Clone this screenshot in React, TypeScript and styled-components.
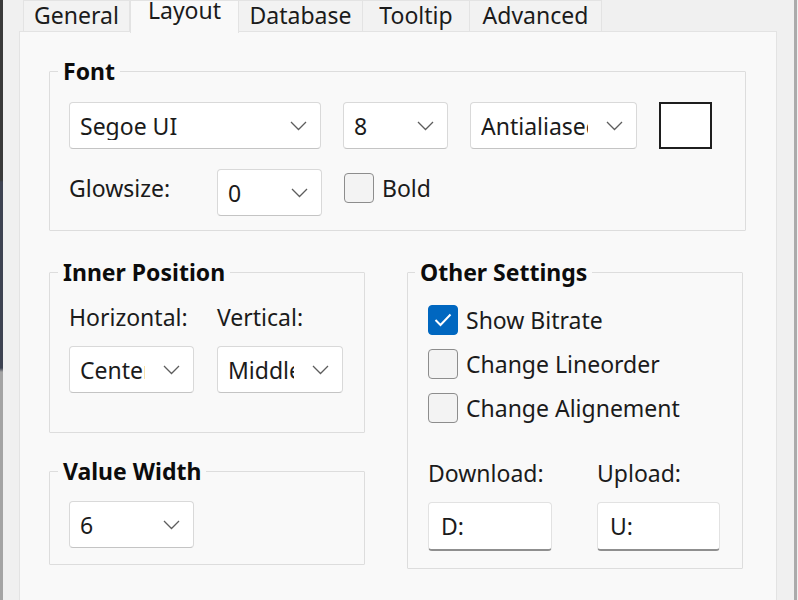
import React from "react";
import styled, { createGlobalStyle } from "styled-components";

const GlobalStyle = createGlobalStyle`
  html, body {
    margin: 0;
    padding: 0;
    background: #f0f0f0;
    overflow: hidden;
  }
  body {
    font-family: "Noto Sans", "Open Sans", sans-serif;
    color: #1b1b1b;
  }
`;

const Screen = styled.div`
  display: flex;
  width: 798px;
  height: 600px;
  overflow: hidden;
`;

// strip of the window behind the dialog
const BackEdge = styled.div`
  width: 3px;
  flex: none;
  background: linear-gradient(
    to bottom,
    #3a3a3a 0,
    #3a3a3a 180px,
    #3e4352 182px,
    #3e4352 368px,
    #a4a4a4 372px,
    #a4a4a4 100%
  );
`;

const Dialog = styled.div`
  flex: 1;
  display: flex;
  flex-direction: column;
  background: #f0f0f0;
  padding: 0 17px 0 16px;
  border-right: 3px solid #ababab;
  margin-right: 1px;
`;

const TabStrip = styled.div`
  display: flex;
  align-items: flex-end;
  height: 31px;
  padding-left: 4px;
  position: relative;
  z-index: 1;
`;

const Tab = styled.div<{ $w: number; $active?: boolean }>`
  width: ${(p) => p.$w}px;
  height: ${(p) => (p.$active ? 33 : 31)}px;
  margin-bottom: ${(p) => (p.$active ? -2 : 0)}px;
  box-sizing: border-box;
  display: flex;
  justify-content: center;
  align-items: ${(p) => (p.$active ? "flex-start" : "flex-end")};
  padding-bottom: ${(p) => (p.$active ? 0 : 2)}px;
  font-size: 23px;
  line-height: ${(p) => (p.$active ? 18 : 27)}px;
  color: #1b1b1b;
  background: ${(p) => (p.$active ? "#f9f9f9" : "#f2f2f2")};
  border: 1px solid #e3e3e3;
  border-bottom: none;
  border-left-width: ${(p) => (p.$active ? 1 : 0)}px;
  &:first-child {
    border-left-width: 1px;
  }
  white-space: nowrap;
`;

const Panel = styled.div`
  flex: 1;
  background: #f9f9f9;
  border: 1px solid #e3e3e3;
  border-bottom: none;
  padding: 25px 30px 0 29px;
`;

const Group = styled.fieldset<{ $pt: number; $pb: number; $pl?: number }>`
  margin: 0;
  min-width: 0;
  border: 1px solid #dddddd;
  border-radius: 1px;
  padding: ${(p) => p.$pt}px 12px ${(p) => p.$pb}px ${(p) => p.$pl ?? 19}px;
`;

const Legend = styled.legend<{ $shift?: number }>`
  margin-left: ${(p) => p.$shift ?? -11}px;
  padding: 0 5px;
  font-size: 23px;
  line-height: 28px;
  font-weight: 700;
  color: #0c0c0c;
`;

const Row = styled.div<{ $gap: number }>`
  display: flex;
  align-items: center;
  gap: ${(p) => p.$gap}px;
`;

const Columns = styled.div`
  display: grid;
  grid-template-columns: 316px 336px;
  column-gap: 42px;
  align-items: start;
  margin-top: 27px;
`;

const Stack = styled.div<{ $gap: number }>`
  display: flex;
  flex-direction: column;
  gap: ${(p) => p.$gap}px;
`;

const FieldGrid = styled.div<{ $cols: string; $gap: number; $top?: number }>`
  display: grid;
  grid-template-columns: ${(p) => p.$cols};
  column-gap: ${(p) => p.$gap}px;
  row-gap: 15px;
  margin-top: ${(p) => p.$top ?? 0}px;
`;

const Label = styled.div<{ $w?: number; $raise?: number }>`
  font-size: 23px;
  line-height: 28px;
  white-space: nowrap;
  margin-bottom: ${(p) => p.$raise ?? 0}px;
  ${(p) => (p.$w ? `width: ${p.$w}px; flex: none;` : "")}
`;

const ComboBox = styled.div<{ $w: number }>`
  width: ${(p) => p.$w}px;
  height: 47px;
  flex: none;
  box-sizing: border-box;
  display: flex;
  align-items: center;
  background: #ffffff;
  border: 1px solid #d9d9d9;
  border-bottom-color: #c4c4c4;
  border-radius: 4px;
  padding: 0 13px 0 10px;
`;

const ComboText = styled.div`
  flex: 1;
  min-width: 0;
  overflow: hidden;
  white-space: nowrap;
  font-size: 23px;
  line-height: 28px;
  margin-right: 18px;
`;

const ColorSwatch = styled.div`
  width: 53px;
  height: 47px;
  box-sizing: border-box;
  border: 2px solid #1e1e1e;
  background: #ffffff;
  flex: none;
`;

const CheckRow = styled.label<{ $raise?: number }>`
  display: flex;
  align-items: center;
  gap: 8px;
  font-size: 23px;
  line-height: 28px;
  white-space: nowrap;
  margin-bottom: ${(p) => p.$raise ?? 0}px;
`;

const Box = styled.span<{ $checked?: boolean }>`
  width: 30px;
  height: 30px;
  flex: none;
  box-sizing: border-box;
  border-radius: 4px;
  display: flex;
  align-items: center;
  justify-content: center;
  background: ${(p) => (p.$checked ? "#0067c0" : "#f3f3f3")};
  border: 1px solid ${(p) => (p.$checked ? "#0067c0" : "#8d8d8d")};
`;

const TextBox = styled.div<{ $w: number }>`
  width: ${(p) => p.$w}px;
  height: 49px;
  box-sizing: border-box;
  display: flex;
  align-items: center;
  padding-left: 12px;
  background: #ffffff;
  border: 1px solid #e2e2e2;
  border-bottom: 2px solid #8f8f8f;
  border-radius: 4px;
  font-size: 23px;
  line-height: 28px;
`;

const Chevron = () => (
  <svg width="17" height="10" viewBox="0 0 17 10">
    <polyline points="1,1 8.5,8.5 16,1" fill="none" stroke="#5d5d5d" strokeWidth="1.3" />
  </svg>
);

const Combo = ({ w, value }: { w: number; value: string }) => (
  <ComboBox $w={w}>
    <ComboText>{value}</ComboText>
    <Chevron />
  </ComboBox>
);

const CheckBox = ({ checked, label, raise }: { checked?: boolean; label: string; raise?: number }) => (
  <CheckRow $raise={raise}>
    <Box $checked={checked}>
      {checked && (
        <svg width="20" height="16" viewBox="0 0 20 16">
          <polyline points="2.5,8 7.5,13 17.5,2.5" fill="none" stroke="#ffffff" strokeWidth="2" />
        </svg>
      )}
    </Box>
    {label}
  </CheckRow>
);

const tabs = [
  { name: "General", w: 107 },
  { name: "Layout", w: 109, active: true },
  { name: "Database", w: 124 },
  { name: "Tooltip", w: 107 },
  { name: "Advanced", w: 132 },
];

export default function App() {
  return (
    <>
      <GlobalStyle />
      <Screen>
        <BackEdge />
        <Dialog>
          <TabStrip>
            {tabs.map((t) => (
              <Tab key={t.name} $w={t.w} $active={t.active}>
                {t.name}
              </Tab>
            ))}
          </TabStrip>
          <Panel>
            <Group $pt={17} $pb={14}>
              <Legend>Font</Legend>
              <Stack $gap={20}>
                <Row $gap={22}>
                  <Combo w={252} value="Segoe UI" />
                  <Combo w={105} value="8" />
                  <Combo w={167} value="Antialiased" />
                  <ColorSwatch />
                </Row>
                <Row $gap={22}>
                  <Label $w={126} $raise={9}>Glowsize:</Label>
                  <Combo w={105} value="0" />
                  <CheckBox label="Bold" raise={9} />
                </Row>
              </Stack>
            </Group>

            <Columns>
              <Stack $gap={24}>
                <Group $pt={17} $pb={39}>
                  <Legend>Inner Position</Legend>
                  <FieldGrid $cols="125px 126px" $gap={23}>
                    <Label>Horizontal:</Label>
                    <Label>Vertical:</Label>
                    <Combo w={125} value="Center" />
                    <Combo w={126} value="Middle" />
                  </FieldGrid>
                </Group>
                <Group $pt={16} $pb={16}>
                  <Legend>Value Width</Legend>
                  <Combo w={125} value="6" />
                </Group>
              </Stack>

              <Group $pt={19} $pb={17} $pl={20}>
                <Legend $shift={-13}>Other Settings</Legend>
                <Stack $gap={14}>
                  <CheckBox checked label="Show Bitrate" />
                  <CheckBox label="Change Lineorder" />
                  <CheckBox label="Change Alignement" />
                </Stack>
                <FieldGrid $cols="124px 123px" $gap={45} $top={36}>
                  <Label>Download:</Label>
                  <Label>Upload:</Label>
                  <TextBox $w={124}>D:</TextBox>
                  <TextBox $w={123}>U:</TextBox>
                </FieldGrid>
              </Group>
            </Columns>
          </Panel>
        </Dialog>
      </Screen>
    </>
  );
}
